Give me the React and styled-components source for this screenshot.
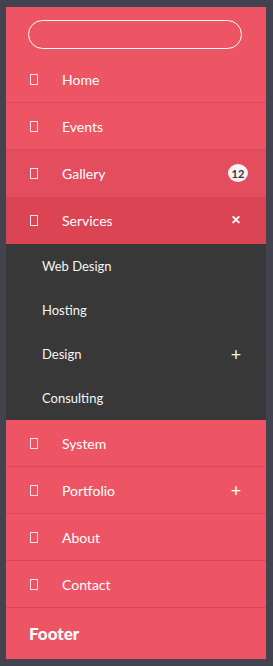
import styled, { createGlobalStyle } from "styled-components";

const GlobalStyle = createGlobalStyle`
  body {
    margin: 0;
    background: #43434f;
    font-family: Lato, "Open Sans", "Liberation Sans", sans-serif;
  }
`;

const Page = styled.div`
  padding: 7px 6px;
`;

const Panel = styled.nav`
  width: 260px;
  background: #ed5565;
  color: #fff;
`;

const SearchArea = styled.div`
  height: 49px;
  box-sizing: border-box;
  padding: 13px 24px 0 22px;
`;

const SearchInput = styled.input`
  display: block;
  width: 214px;
  height: 29px;
  box-sizing: border-box;
  border: 1px solid #fff;
  border-radius: 15px;
  background: transparent;
  outline: none;
  color: #fff;
  padding: 0 12px;
`;

const Row = styled.div`
  display: flex;
  align-items: center;
  height: 47px;
  box-sizing: border-box;
  padding: 0 18px 0 24px;
  background: ${(p) => p.$bg || "#ed5565"};
  border-bottom: 1px solid ${(p) => (p.$last ? "transparent" : "#dc4656")};
  font-size: 14px;
`;

const Glyph = styled.span`
  width: 8px;
  height: 11px;
  box-sizing: border-box;
  border: 1px solid #fde;
  margin-right: 24px;
  flex-shrink: 0;
`;

const Label = styled.span`
  flex: 1;
`;

const Badge = styled.span`
  width: 20px;
  height: 18px;
  border-radius: 50%;
  background: #f4f4f4;
  color: #333;
  font-size: 11px;
  font-weight: 700;
  display: flex;
  align-items: center;
  justify-content: center;
`;

const Sign = styled.span`
  width: 16px;
  margin-right: 4px;
  display: flex;
  justify-content: center;
  font-size: ${(p) => (p.$close ? "12px" : "18px")};
  font-weight: ${(p) => (p.$close ? 700 : 400)};
  line-height: 1;
`;

const SubMenu = styled.div`
  background: #383838;
`;

const SubRow = styled.div`
  display: flex;
  align-items: center;
  height: 44px;
  padding: 0 18px 0 36px;
  font-size: 13px;
  color: #f4f4f4;
`;

const Footer = styled.div`
  height: 51px;
  display: flex;
  align-items: center;
  padding-left: 23px;
  font-size: 17px;
  font-weight: 900;
`;

const top = [
  { label: "Home" },
  { label: "Events" },
  { label: "Gallery", badge: "12", bg: "#e34d5e" },
  { label: "Services", sign: "close", bg: "#da4453" },
];

const bottom = [
  { label: "System" },
  { label: "Portfolio", sign: "plus" },
  { label: "About" },
  { label: "Contact" },
];

const sub = [
  { label: "Web Design" },
  { label: "Hosting" },
  { label: "Design", plus: true },
  { label: "Consulting" },
];

function MenuRow({ item, last }) {
  return (
    <Row $bg={item.bg} $last={last}>
      <Glyph />
      <Label>{item.label}</Label>
      {item.badge && <Badge>{item.badge}</Badge>}
      {item.sign === "close" && <Sign $close>✕</Sign>}
      {item.sign === "plus" && <Sign>+</Sign>}
    </Row>
  );
}

export default function App() {
  return (
    <Page>
      <GlobalStyle />
      <Panel>
        <SearchArea>
          <SearchInput type="text" />
        </SearchArea>
        {top.map((item) => (
          <MenuRow key={item.label} item={item} last={item.bg} />
        ))}
        <SubMenu>
          {sub.map((s) => (
            <SubRow key={s.label}>
              <Label>{s.label}</Label>
              {s.plus && <Sign>+</Sign>}
            </SubRow>
          ))}
        </SubMenu>
        {bottom.map((item) => (
          <MenuRow key={item.label} item={item} />
        ))}
        <Footer>Footer</Footer>
      </Panel>
    </Page>
  );
}
